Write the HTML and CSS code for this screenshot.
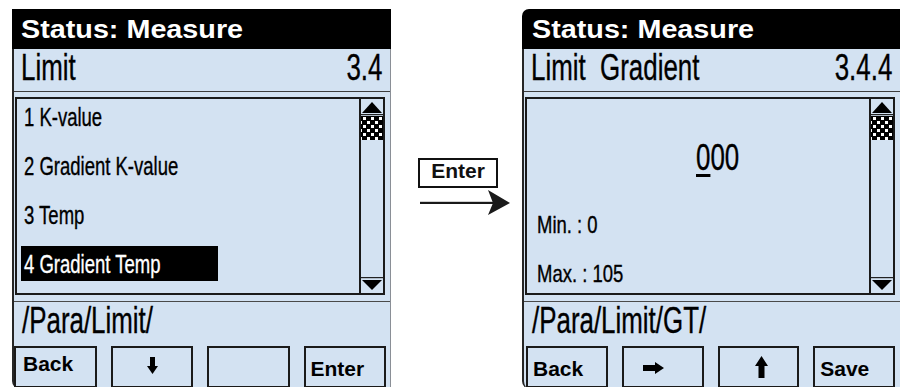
FILE: index.html
```html
<!DOCTYPE html>
<html lang="en">
<head>
<meta charset="utf-8">
<title>Limit Gradient</title>
<link rel="stylesheet" href="styles.css">
</head>
<body>
<div class="stage">
  <section class="panel">
    <div class="status"><span class="wide">Status: Measure</span></div>
    <div class="body">
      <div class="title"><span class="cn">Limit</span><span class="cn cn-r">3.4</span></div>
      <div class="box">
        <ul class="list">
          <li class="item"><span class="cn">1 K-value</span></li>
          <li class="item"><span class="cn">2 Gradient K-value</span></li>
          <li class="item"><span class="cn">3 Temp</span></li>
          <li class="item sel"><span class="cn">4 Gradient Temp</span></li>
        </ul>
        <svg class="scroll" width="22" height="194" viewBox="0 0 22 194">
          <defs>
            <pattern id="ck1" x="1" y="17" width="8" height="8" patternUnits="userSpaceOnUse">
              <rect width="8" height="8" fill="#000"/>
              <rect x="1" y="1" width="3" height="3" fill="#fff"/>
              <rect x="5" y="5" width="3" height="3" fill="#fff"/>
            </pattern>
          </defs>
          <polygon points="1,14 11,3 21,14" fill="#000"/>
          <rect x="0" y="15" width="22" height="1.2" fill="#222"/>
          <rect x="0" y="17" width="22" height="24" fill="url(#ck1)"/>
          <rect x="0" y="178" width="22" height="1.2" fill="#222"/>
          <polygon points="1,181 21,181 11,191" fill="#000"/>
        </svg>
      </div>
      <div class="path"><span class="cn">/Para/Limit/</span></div>
      <div class="keys">
        <div class="key key-hi">Back</div>
        <div class="key">
          <svg class="ic ic-down" width="11" height="17" viewBox="0 0 11 17"><polygon points="3,0 8,0 8,9 11,9 5.5,17 0,9 3,9" fill="#000"/></svg>
        </div>
        <div class="key"></div>
        <div class="key">Enter</div>
      </div>
    </div>
  </section>

  <div class="mid">
    <div class="label">Enter</div>
    <svg class="arrow" width="92" height="26" viewBox="0 0 92 26">
      <rect x="0" y="11.8" width="76" height="2.2" fill="#1a1a1a"/>
      <polygon points="68,0 90,13 68,25 73,13" fill="#1a1a1a"/>
    </svg>
  </div>

  <section class="panel panel-r">
    <div class="status status-r"><span class="wide">Status: Measure</span></div>
    <div class="body">
      <div class="title"><span class="cn">Limit  Gradient</span><span class="cn cn-r">3.4.4</span></div>
      <div class="box">
        <div class="edit">
          <div class="value"><span class="cn"><span class="cursor">0</span>00</span></div>
          <div class="range range-min"><span class="cn cn-s">Min. : 0</span></div>
          <div class="range range-max"><span class="cn cn-s">Max. : 105</span></div>
        </div>
        <svg class="scroll" width="22" height="194" viewBox="0 0 22 194">
          <defs>
            <pattern id="ck2" x="1" y="17" width="8" height="8" patternUnits="userSpaceOnUse">
              <rect width="8" height="8" fill="#000"/>
              <rect x="1" y="1" width="3" height="3" fill="#fff"/>
              <rect x="5" y="5" width="3" height="3" fill="#fff"/>
            </pattern>
          </defs>
          <polygon points="1,14 11,3 21,14" fill="#000"/>
          <rect x="0" y="15" width="22" height="1.2" fill="#222"/>
          <rect x="0" y="17" width="22" height="24" fill="url(#ck2)"/>
          <rect x="0" y="178" width="22" height="1.2" fill="#222"/>
          <polygon points="1,181 21,181 11,191" fill="#000"/>
        </svg>
      </div>
      <div class="path"><span class="cn">/Para/Limit/GT/</span></div>
      <div class="keys keys-r">
        <div class="key">Back</div>
        <div class="key">
          <svg class="ic ic-right" width="21" height="12" viewBox="0 0 21 12"><polygon points="0,3 12,3 12,0 21,6 12,12 12,9 0,9" fill="#000"/></svg>
        </div>
        <div class="key">
          <svg class="ic ic-up" width="13" height="22" viewBox="0 0 13 22"><polygon points="6.5,0 13,10 9.5,10 9.5,22 3.5,22 3.5,10 0,10" fill="#000"/></svg>
        </div>
        <div class="key">Save</div>
      </div>
    </div>
  </section>
</div>
</body>
</html>
```

FILE: styles.css
```css
html, body {
  margin: 0;
  padding: 0;
  background: #fff;
  height: 387px;
  overflow: hidden;
}

body {
  font-family: "Liberation Sans", Arial, sans-serif;
  color: #000;
}

.stage {
  display: flex;
  align-items: flex-start;
  padding: 9px 0 0 12px;
}

.panel {
  width: 379px;
  flex: none;
  display: flex;
  flex-direction: column;
}

.status {
  height: 40px;
  background: #000;
  color: #fff;
  font-weight: bold;
  font-size: 25px;
  line-height: 40px;
  padding-left: 9px;
  white-space: nowrap;
}

.status-r {
  border-top-left-radius: 7px;
  padding-left: 10px;
}

.wide {
  display: inline-block;
  transform: scaleX(1.15);
  transform-origin: 0 50%;
}

.body {
  height: 340px;
  background: #d3e2f2;
  border-left: 2px solid #262626;
  border-right: 1px solid #8a8f96;
  border-bottom-left-radius: 8px;
  display: flex;
  flex-direction: column;
}

.cn {
  display: inline-block;
  white-space: pre;
  transform: scaleX(0.7);
  transform-origin: 0 50%;
  -webkit-text-stroke: 0.35px currentColor;
}

.cn-r {
  transform-origin: 100% 50%;
}

.title {
  height: 42px;
  display: flex;
  justify-content: space-between;
  align-items: flex-start;
  padding: 0 8px 0 7px;
  font-size: 37px;
  line-height: 37px;
  border-bottom: 1px solid #3c3c3c;
}

.box {
  margin: 5px 5px 0 1px;
  height: 198px;
  box-sizing: border-box;
  border: 2px solid #1a1a1a;
  display: flex;
}

.list {
  flex: 1;
  margin: 0;
  padding: 0 0 0 4px;
  list-style: none;
  display: flex;
  flex-direction: column;
  gap: 14px;
}

.item {
  width: 197px;
  height: 35px;
  box-sizing: border-box;
  padding: 2px 0 0 3px;
  font-size: 25px;
  line-height: 33px;
}

.item .cn {
  transform: scaleX(0.74);
}

.sel {
  background: #000;
  color: #fff;
}

.scroll {
  flex: none;
  display: block;
  border-left: 2px solid #1a1a1a;
}

.edit {
  flex: 1;
  padding-left: 10px;
}

.value {
  margin-top: 41px;
  padding-left: 159px;
  font-size: 36px;
  line-height: 36px;
}

.value .cn {
  transform: scaleX(0.72);
}

.cursor {
  text-decoration: underline;
  text-decoration-thickness: 3px;
  text-underline-offset: 4px;
}

.range {
  font-size: 24px;
  line-height: 24px;
}

.cn-s {
  transform: scaleX(0.77);
}

.range-min {
  margin-top: 37px;
}

.range-max {
  margin-top: 25px;
}

.path {
  margin-top: 6px;
  border-top: 1px solid #4a4a4a;
  height: 37px;
  padding-left: 8px;
  font-size: 37px;
  line-height: 37px;
}

.keys {
  margin-top: 7px;
  padding-right: 4px;
  display: grid;
  grid-template-columns: repeat(4, 1fr);
  gap: 14px;
}

.keys-r {
  padding-left: 2px;
  padding-right: 5px;
}

.key {
  height: 42px;
  box-sizing: border-box;
  border: 2px solid #1a1a1a;
  background: #d3e2f2;
  font-weight: bold;
  font-size: 21px;
  line-height: 21px;
  padding: 10px 0 0 5px;
}

.key-hi {
  padding-top: 5px;
  padding-left: 7px;
}

.ic {
  display: block;
}

.ic-down {
  margin: -1px 0 0 29px;
}

.ic-right {
  margin: 4px 0 0 14px;
}

.ic-up {
  margin: -2px 0 0 30px;
}

.mid {
  width: 131px;
  flex: none;
  padding-top: 149px;
}

.label {
  margin-left: 27px;
  width: 80px;
  height: 30px;
  box-sizing: border-box;
  border: 2px solid #111;
  text-align: center;
  font-weight: bold;
  font-size: 21px;
  line-height: 22px;
  color: #111;
}

.arrow {
  display: block;
  margin: 2px 0 0 29px;
}
```
